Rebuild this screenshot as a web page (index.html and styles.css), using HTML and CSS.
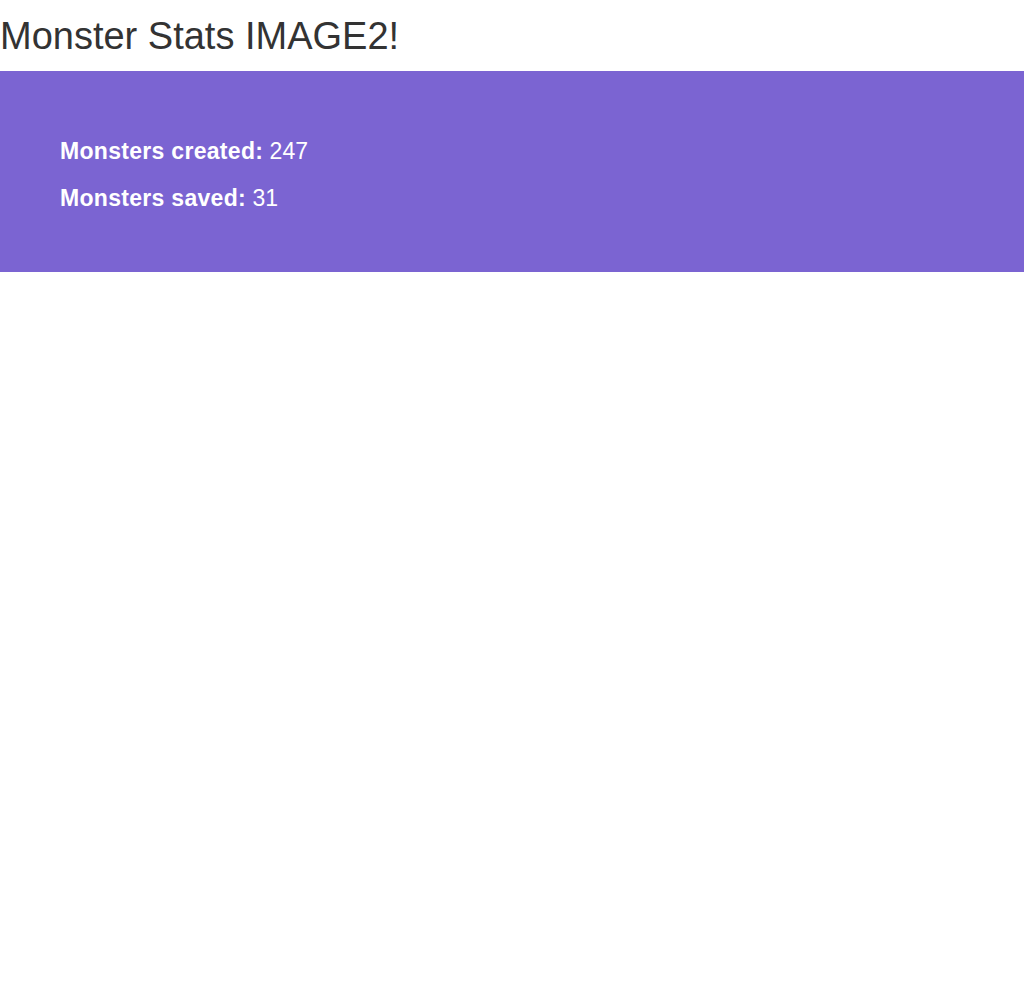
FILE: index.html
```html
<!DOCTYPE html>
<html lang="en">
<head>
<meta charset="utf-8">
<title>Monster Stats</title>
<link rel="stylesheet" href="styles.css">
</head>
<body>
<h1 class="title">Monster Stats IMAGE2!</h1>
<section class="stats">
  <p class="stat"><strong class="label">Monsters created:</strong> 247</p>
  <p class="stat"><strong class="label">Monsters saved:</strong> 31</p>
</section>
</body>
</html>
```
FILE: styles.css
```css
html, body {
  margin: 0;
  padding: 0;
  background: #ffffff;
}
body {
  font-family: "Liberation Sans", Arial, sans-serif;
  color: #333333;
}
.title {
  margin: 16px 0 14px;
  font-size: 38px;
  line-height: 41px;
  font-weight: 400;
  color: #333333;
}
.stats {
  background: #7b64d2;
  padding: 65px 60px 58px;
  display: flex;
  flex-direction: column;
  gap: 16px;
}
.stat {
  margin: 0;
  color: #ffffff;
  font-size: 23px;
  line-height: 31px;
}
.label {
  font-weight: 700;
  letter-spacing: 0.3px;
}
```
